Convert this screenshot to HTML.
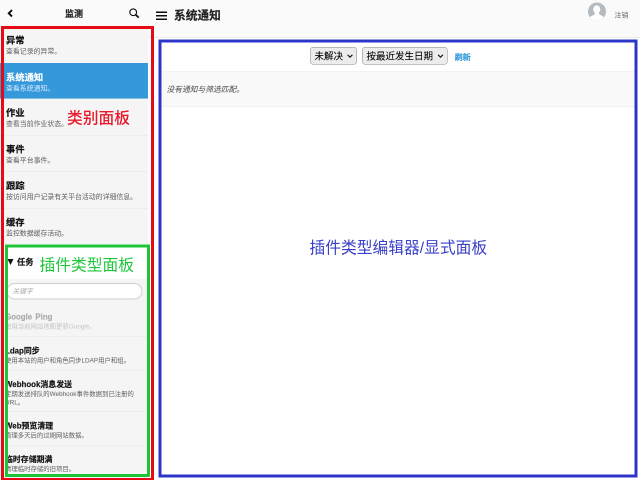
<!DOCTYPE html>
<html lang="zh-CN">
<head>
<meta charset="utf-8">
<title>系统通知</title>
<style>
html,body{margin:0;padding:0;}
body{width:640px;height:480px;overflow:hidden;background:#fff;font-family:"Liberation Sans","Noto Sans CJK SC",sans-serif;}
#root{position:absolute;left:0;top:0;width:1280px;height:960px;transform:scale(.5);transform-origin:0 0;will-change:transform;overflow:hidden;background:#fff;color:#111;}
#root *{box-sizing:border-box;}
.abs{position:absolute;}
/* sidebar */
#side{left:0;top:0;width:296px;height:960px;background:#f5f5f5;}
#sidehead{left:0;top:0;width:302px;height:52px;background:#fafafa;}
#sidetitle{left:0;top:13.5px;width:296px;text-align:center;font-size:18px;font-weight:bold;line-height:28px;color:#1a1a1a;-webkit-text-stroke:0.3px #1a1a1a;}
.item{left:0;width:296px;height:72.7px;border-top:1px solid #e4e4e4;}
.item .t{position:absolute;left:12px;top:16px;-webkit-text-stroke:0.35px;font-size:18.6px;line-height:24px;font-weight:bold;color:#111;white-space:nowrap;}
.item .d{position:absolute;left:12px;top:41px;font-size:13.8px;line-height:18px;color:#606060;white-space:nowrap;}
.item.sel{background:#3498db;border-top-color:#3498db;}
.item.sel .t{color:#fff;}
.item.sel .d{color:#d9ecf9;}
#taskhead{left:0;top:488px;width:296px;height:70px;background:#fff;}
#taskhead .t{position:absolute;left:34px;top:24px;-webkit-text-stroke:0.35px;font-size:16.5px;line-height:24px;font-weight:bold;color:#111;}
#search{left:13px;top:566px;width:272px;height:33px;border:2px solid #cfcfcf;border-radius:16.5px;background:#fff;font-size:13.5px;font-style:italic;color:#aaa;line-height:29px;padding-left:10px;}
.titem{left:0;width:296px;border-top:1px solid #e4e4e4;}
.titem .t{position:absolute;left:10px;top:16px;-webkit-text-stroke:0.3px;font-size:15.8px;line-height:24px;font-weight:bold;color:#111;white-space:nowrap;}
.titem .d{position:absolute;left:10px;top:38px;font-size:12.75px;line-height:17px;color:#606060;width:276px;}
.titem.dis .t{color:#ababab;word-spacing:2px;}
.titem.dis .d{color:#c4c4c4;}
/* main */
#mainhead{left:296px;top:0;width:984px;height:76px;background:#fafafa;border-bottom:1px solid #dcdcdc;}
#maintitle{left:348px;top:14px;-webkit-text-stroke:0.4px #222;font-size:23.4px;line-height:34px;font-weight:bold;color:#222;white-space:nowrap;}
.bar{left:311.6px;width:22.6px;height:3.1px;background:#0c0c0c;}
#logout{left:1229px;top:21px;font-size:14px;line-height:18px;color:#666;white-space:nowrap;}
#toolbar{left:322px;top:84px;width:948px;height:59.5px;background:#fff;border-bottom:1px solid #e6e6e6;}
.sel2{top:94px;height:35px;border:1.5px solid #858585;border-radius:6px;background:#ececec;font-size:19px;line-height:36px;color:#000;-webkit-text-stroke:0.15px;padding-left:8px;white-space:nowrap;}
#refresh{left:909.5px;top:104.5px;-webkit-text-stroke:0.3px;font-size:16px;line-height:20px;color:#3498db;font-weight:bold;white-space:nowrap;}
#empty{left:322px;top:143.5px;width:948px;height:70.5px;background:#f9f9f9;border-bottom:1px solid #e6e6e6;}
#empty span{position:absolute;left:11px;top:25.3px;font-size:15.5px;line-height:20px;font-style:italic;color:#444;white-space:nowrap;}
/* annotations */
.box{border-style:solid;border-width:6px;}
.lab{white-space:nowrap;font-size:31.5px;line-height:40px;font-weight:400;}
</style>
</head>
<body>
<div id="root">
  <div class="abs" id="side"></div>
  <div class="abs" id="mainhead"></div>
  <div class="abs" id="sidehead"></div>

  <!-- sidebar header -->
  <svg class="abs" style="left:12px;top:16px" width="16" height="22" viewBox="0 0 16 22"><path d="M12 4.2 L5.6 10.6 L12 17" fill="none" stroke="#111" stroke-width="4" stroke-linecap="butt" stroke-linejoin="miter"/></svg>
  <div class="abs" id="sidetitle">监测</div>
  <svg class="abs" style="left:258px;top:15px" width="22" height="22" viewBox="0 0 22 22"><circle cx="8.4" cy="9.5" r="6.7" fill="none" stroke="#111" stroke-width="2.3"/><path d="M13.3 14.4 L19.4 20.3" stroke="#111" stroke-width="3.6" stroke-linecap="butt"/></svg>

  <!-- category list -->
  <div class="abs item" style="top:52px"><div class="t">异常</div><div class="d">查看记录的异常。</div></div>
  <div class="abs item sel" style="top:125.5px;height:72.9px"><div class="t">系统通知</div><div class="d">查看系统通知。</div></div>
  <div class="abs item" style="top:197.4px"><div class="t">作业</div><div class="d">查看当前作业状态。</div></div>
  <div class="abs item" style="top:270.1px"><div class="t">事件</div><div class="d">查看平台事件。</div></div>
  <div class="abs item" style="top:342.8px"><div class="t">跟踪</div><div class="d">按访问用户记录有关平台活动的详细信息。</div></div>
  <div class="abs item" style="top:415.5px"><div class="t">缓存</div><div class="d">监控数据缓存活动。</div></div>

  <!-- tasks -->
  <div class="abs" id="taskhead"><svg style="position:absolute;left:15px;top:30px" width="12" height="12" viewBox="0 0 12 12"><path d="M0 0 L12 0 L6 12 Z" fill="#111"/></svg><div class="t">任务</div></div>
  <div class="abs" id="search">关键字</div>
  <div class="abs titem dis" style="top:605.5px;height:68px;border-top:0"><div class="t">Google Ping</div><div class="d">使用当前网站地图更新Google。</div></div>
  <div class="abs titem" style="top:672.5px;height:68px"><div class="t">Ldap同步</div><div class="d">使用本站的用户和角色同步LDAP用户和组。</div></div>
  <div class="abs titem" style="top:739.5px;height:84px"><div class="t">Webhook消息发送</div><div class="d">定期发送排队的Webhook事件数据到已注册的URL。</div></div>
  <div class="abs titem" style="top:823.3px;height:66px"><div class="t">Web预览清理</div><div class="d">清理多天后的过期网站数据。</div></div>
  <div class="abs titem" style="top:890.3px;height:68px;border-bottom:0"><div class="t">临时存储期满</div><div class="d">清理临时存储的旧项目。</div></div>

  <!-- main header -->
  <div class="abs bar" style="top:23px"></div>
  <div class="abs bar" style="top:29.8px"></div>
  <div class="abs bar" style="top:36.5px"></div>
  <div class="abs" id="maintitle">系统通知</div>
  <svg class="abs" style="left:1176px;top:5px" width="36" height="36" viewBox="0 0 36 36"><defs><clipPath id="av"><circle cx="18" cy="18" r="18"/></clipPath></defs><circle cx="18" cy="18" r="18" fill="#b4bbc1"/><g clip-path="url(#av)" fill="#fff"><ellipse cx="17.5" cy="14" rx="7" ry="8.3"/><path d="M14 20 C14 27.5 3.5 24 1 36 L35 36 C32.5 24 21.5 27.5 21.5 20 Z"/></g></svg>
  <div class="abs" id="logout">注销</div>

  <!-- main panel -->
  <div class="abs" id="toolbar"></div>
  <div class="abs sel2" style="left:620px;width:94px">未解决<svg style="position:absolute;right:7px;top:13px" width="12" height="9" viewBox="0 0 12 9"><path d="M1.2 1.6 L6 6.4 L10.8 1.6" fill="none" stroke="#111" stroke-width="2.2"/></svg></div>
  <div class="abs sel2" style="left:724px;width:171px">按最近发生日期<svg style="position:absolute;right:7px;top:13px" width="12" height="9" viewBox="0 0 12 9"><path d="M1.2 1.6 L6 6.4 L10.8 1.6" fill="none" stroke="#111" stroke-width="2.2"/></svg></div>
  <div class="abs" id="refresh">刷新</div>
  <div class="abs" id="empty"><span>没有通知与筛选匹配。</span></div>

  <!-- annotation overlays -->
  <div class="abs box" style="left:10px;top:489px;width:290px;height:464.6px;border-color:#1cc438"></div>
  <div class="abs box" style="left:2px;top:52px;width:306px;height:910.4px;border-color:#e60a14"></div>
  <div class="abs box" style="left:316.5px;top:79.3px;width:958px;height:876px;border-color:#2d35c8"></div>
  <div class="abs lab" style="left:134px;top:215.5px;color:#e9182a;font-weight:500">类别面板</div>
  <div class="abs lab" style="left:79px;top:510px;color:#1fc63c">插件类型面板</div>
  <div class="abs lab" style="left:619px;top:475px;color:#3a40c8">插件类型编辑器/显式面板</div>
</div>
</body>
</html>
